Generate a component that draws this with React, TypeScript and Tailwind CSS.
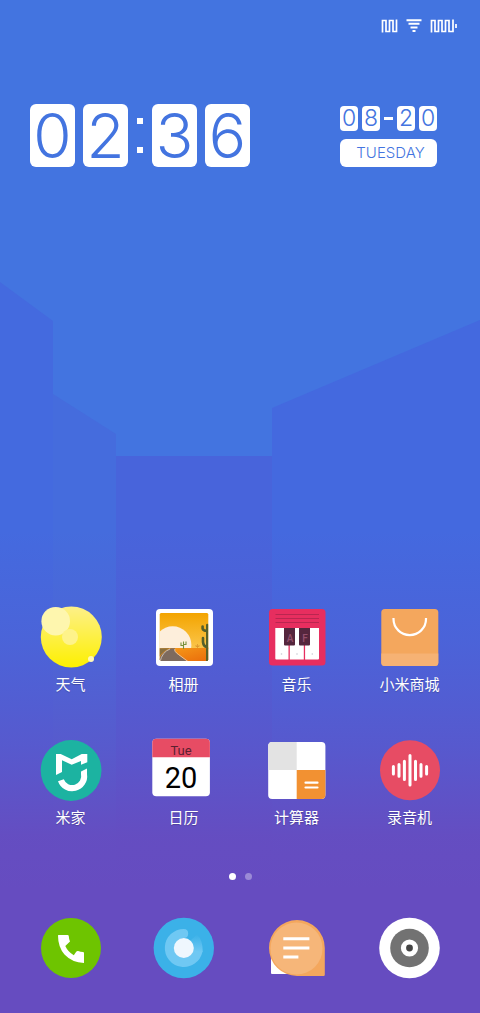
import type { ReactNode } from "react";

const Wallpaper = () => (
  <svg
    className="absolute inset-0 -z-10 h-full w-full"
    viewBox="0 0 480 1013"
    preserveAspectRatio="none"
    aria-hidden="true"
  >
    <defs>
      <linearGradient id="dusk" x1="0" y1="0" x2="0" y2="1">
        <stop offset="0" stopColor="#664cc0" stopOpacity="0" />
        <stop offset="0.3" stopColor="#664cc0" stopOpacity="0.2" />
        <stop offset="0.6" stopColor="#664cc0" stopOpacity="0.55" />
        <stop offset="0.85" stopColor="#664cc0" stopOpacity="0.95" />
        <stop offset="1" stopColor="#664cc0" />
      </linearGradient>
    </defs>
    <rect width="480" height="1013" fill="#4374e0" />
    <path d="M0 282L53 321V1013H0Z" fill="#446adf" />
    <path d="M53 394L116 434V1013H53Z" fill="#456cdd" />
    <path d="M116 456H272V1013H116Z" fill="#4864db" />
    <path d="M272 408L480 320V1013H272Z" fill="#4469df" />
    <rect y="530" width="480" height="360" fill="url(#dusk)" />
    <rect y="889" width="480" height="124" fill="#664cc0" />
  </svg>
);

const StatusBar = () => (
  <div className="flex items-center justify-end gap-2 pt-[19px] pr-[22px]">
    <svg width="17" height="14" viewBox="0 0 17 14" fill="none" stroke="white" strokeWidth="1.7">
      <path d="M1.5 13.5V1.5H5V12.5H8.5V1.5H12V12.5H15.5V0.5" />
    </svg>
    <svg width="16" height="14" viewBox="0 0 16 14" stroke="white" strokeWidth="2">
      <path d="M0.5 1.2H15.5M2.5 4.8H13.5M4.5 8.4H11.5M6.5 12H9.5" />
    </svg>
    <svg width="28" height="14" viewBox="0 0 28 14" fill="none" stroke="white" strokeWidth="1.7">
      <path d="M1.5 13.5V1.5H5V12.5H8.5V1.5H12V12.5H15.5V1.5H19V12.5H23V0.5" />
      <path d="M26 5V9" />
    </svg>
  </div>
);

const BigDigit = ({ value }: { value: string }) => (
  <span className="flex h-[63px] w-[45px] items-center justify-center rounded-md bg-white text-[62px] leading-[62px]">
    {value}
  </span>
);

const SmallDigit = ({ value }: { value: string }) => (
  <span className="flex h-[25px] w-[18px] items-center justify-center rounded bg-white text-[23px] leading-[25px]">
    {value}
  </span>
);

const Clock = () => (
  <div className="mt-[71px] flex items-start justify-between pr-[43px] pl-[30px] font-['Inter',sans-serif] font-light text-[#4374e0]">
    <div className="flex items-center">
      <div className="flex gap-2">
        <BigDigit value="0" />
        <BigDigit value="2" />
      </div>
      <div className="mx-[9px] flex flex-col gap-[23px]">
        <span className="size-[6px] bg-white" />
        <span className="size-[6px] bg-white" />
      </div>
      <div className="flex gap-2">
        <BigDigit value="3" />
        <BigDigit value="6" />
      </div>
    </div>
    <div className="mt-0.5">
      <div className="flex items-center gap-1">
        <SmallDigit value="0" />
        <SmallDigit value="8" />
        <span className="h-[3px] w-[9px] bg-white" />
        <SmallDigit value="2" />
        <SmallDigit value="0" />
      </div>
      <div className="mt-2 flex h-[28px] items-center justify-center rounded-md bg-white pl-1 text-[15px]">
        TUESDAY
      </div>
    </div>
  </div>
);

const Icon = ({ children }: { children: ReactNode }) => (
  <svg width="65" height="65" viewBox="0 0 65 65" fill="none" aria-hidden="true">
    {children}
  </svg>
);

const WeatherIcon = () => (
  <Icon>
    <defs>
      <linearGradient id="sun" x1="0" y1="0" x2="0" y2="1">
        <stop offset="0" stopColor="#fdf089" />
        <stop offset="1" stopColor="#fdf000" />
      </linearGradient>
    </defs>
    <circle cx="33.3" cy="32" r="30.5" fill="url(#sun)" />
    <circle cx="17.7" cy="16.2" r="14.3" fill="#fef6ae" />
    <circle cx="32" cy="32" r="8" fill="#fef38a" />
    <circle cx="53" cy="54" r="3" fill="#fff8b8" />
  </Icon>
);

const GalleryIcon = () => (
  <Icon>
    <defs>
      <linearGradient id="sky" x1="0" y1="0" x2="0" y2="1">
        <stop offset="0" stopColor="#f3a400" />
        <stop offset="1" stopColor="#fbc64c" />
      </linearGradient>
      <linearGradient id="sand" x1="0" y1="0" x2="1" y2="1">
        <stop offset="0" stopColor="#f6a01c" />
        <stop offset="1" stopColor="#ea6a0a" />
      </linearGradient>
      <clipPath id="photo">
        <rect x="8.7" y="8" width="48.6" height="48" rx="1.5" />
      </clipPath>
    </defs>
    <rect x="5" y="4" width="57" height="57" rx="4" fill="white" />
    <g clipPath="url(#photo)">
      <rect x="8" y="8" width="50" height="36" fill="url(#sky)" />
      <circle cx="21.7" cy="40" r="18.7" fill="#fdeedb" />
      <path d="M8 43.5C20 42 40 44 58 42.5V57H8Z" fill="url(#sand)" />
      <path d="M8 57V54Q11 46 20 43.2H24Q22.5 46 27 49.5L37 57Z" fill="#7d6a5e" />
      <path d="M8 43.2H19Q12 46 8 52Z" fill="#8a7040" />
      <path d="M19 44Q11 47 9 57M24 44Q22.5 46 27.5 49.5L37 56.5" stroke="#efe1cf" strokeWidth="0.7" />
      <path d="M32.5 44V36.5M30 37.5V40.5H32.5M35 36.5V39.5H32.5" stroke="#77913b" strokeWidth="1.1" />
      <path d="M46.5 43V39M45 40V41.5H48V40" stroke="#d9952c" strokeWidth="0.8" />
      <path
        d="M56.3 20V56M51.6 21.5V23.5Q52 25.8 56 25.8M52 33V37Q52.5 41.5 56 42"
        stroke="#56602a"
        strokeWidth="2.6"
        strokeLinecap="round"
      />
    </g>
  </Icon>
);

const MusicIcon = () => (
  <Icon>
    <rect x="5" y="4" width="56.5" height="56.5" rx="3.5" fill="#e72e5f" />
    <path d="M11.5 9.5H55M11.5 13.5H55M11.5 17.5H55" stroke="#b92650" strokeWidth="1" />
    <path
      d="M11.3 23H24.5V54.5H12.3Q11.3 54.5 11.3 53.5ZM25.8 23H39.8V54.5H25.8ZM41.1 23H55V53.5Q55 54.5 54 54.5H41.1Z"
      fill="white"
    />
    <path d="M20 23H31V39.5Q31 40.5 30 40.5H21Q20 40.5 20 39.5ZM35 23H46V39.5Q46 40.5 45 40.5H36Q35 40.5 35 39.5Z" fill="#55263d" />
    <g fill="#94506c" fontFamily="Roboto, sans-serif" fontSize="10" fontWeight="500" textAnchor="middle">
      <text x="26" y="37">A</text>
      <text x="41" y="37">F</text>
    </g>
    <g fill="#c9c9d2">
      <circle cx="17.5" cy="49" r="0.8" />
      <circle cx="33" cy="49" r="0.8" />
      <circle cx="48.3" cy="49" r="0.8" />
    </g>
  </Icon>
);

const StoreIcon = () => (
  <Icon>
    <rect x="4.3" y="4" width="57" height="57" rx="3.5" fill="#f4a75d" />
    <path d="M4.3 48.5H61.3V57.5Q61.3 61 57.8 61H7.8Q4.3 61 4.3 57.5Z" fill="#f6b274" />
    <path d="M16.5 13V14A16.2 16 0 0 0 49 14V13" stroke="white" strokeWidth="2.2" />
  </Icon>
);

const MiHomeIcon = () => (
  <Icon>
    <circle cx="33.1" cy="32.5" r="30.4" fill="#1cb3a1" />
    <path
      d="M18 16H22.7L33.7 21.3L43.7 16H49.3V24.3L43 26.7V23L33.7 26.7L24 22.3V34L18 37Z"
      fill="white"
    />
    <path d="M49 30.5L43 33.5V36A9 9 0 0 1 25.8 41.2L20 43.2A15 15 0 0 0 49 36Z" fill="white" />
  </Icon>
);

const CalendarIcon = () => (
  <Icon>
    <rect x="1.3" y="0.8" width="57.6" height="57.5" rx="4" fill="white" />
    <path d="M1.3 19.3V4.8Q1.3 0.8 5.3 0.8H54.9Q58.9 0.8 58.9 4.8V19.3Z" fill="#e74c64" />
    <g fontFamily="Roboto, sans-serif" textAnchor="middle">
      <text x="30" y="16.5" fontSize="13" fill="#5b2030">Tue</text>
      <text x="30" y="49.7" fontSize="29" fill="black">20</text>
    </g>
  </Icon>
);

const CalculatorIcon = () => (
  <Icon>
    <rect x="4.2" y="4" width="57.2" height="57" rx="4" fill="white" />
    <path d="M4.2 32V8Q4.2 4 8.2 4H32.7V32Z" fill="#e3e3e3" />
    <path d="M32.7 32H61.4V57Q61.4 61 57.4 61H32.7Z" fill="#f29132" />
    <path d="M41.5 44.7H53.5M41.5 49.5H53.5" stroke="white" strokeWidth="2.2" strokeLinecap="round" />
  </Icon>
);

const RecorderIcon = () => (
  <Icon>
    <circle cx="33" cy="32.3" r="30" fill="#e74c64" />
    <path
      d="M16.4 28.6V36M22 26.4V38.2M27.4 23.2V41.4M33 17.6V47M38.5 23.2V41.4M44 26.4V38.2M49.6 28.6V36"
      stroke="white"
      strokeWidth="3"
      strokeLinecap="round"
    />
  </Icon>
);

const PhoneIcon = () => (
  <Icon>
    <circle cx="33" cy="32" r="30" fill="#6ec400" />
    <path
      d="M20.5 19H29.5Q30.7 19 30.8 20.2Q31 23.5 32 25.5L27.3 30Q30 36 35.8 39.2L38.2 35.8Q39 34.7 40.2 35Q42.5 36 45 36Q46 36 46 37.2V47Q34 46.5 26.5 38.5Q20 31 20 19.5Q20 19 20.5 19Z"
      fill="white"
    />
  </Icon>
);

const BrowserIcon = () => (
  <Icon>
    <defs>
      <linearGradient id="tail" x1="0" y1="0" x2="0" y2="1">
        <stop offset="0" stopColor="#6fc8f3" stopOpacity="0" />
        <stop offset="1" stopColor="#6fc8f3" />
      </linearGradient>
    </defs>
    <circle cx="32.8" cy="32" r="30.2" fill="#3bb1e8" />
    <path d="M39 25L46 18.5Q51.8 24 51.8 36H42Z" fill="url(#tail)" />
    <path
      d="M32.8 13A19 19 0 1 0 51.4 36L42 34A9.5 9.5 0 1 1 32.8 22Q37.2 22 37.2 17.5Q37.2 13 32.8 13Z"
      fill="#6fc8f3"
    />
    <circle cx="32.8" cy="32" r="10" fill="#eff7fe" />
  </Icon>
);

const MessagesIcon = () => (
  <Icon>
    <path d="M7 36H32V58H8Q7 58 7 57Z" fill="white" />
    <path d="M33 4A28 28 0 0 0 33 60H59.5Q60.8 60 60.8 58.8V32A28 28 0 0 0 33 4Z" fill="#f4a75d" />
    <circle cx="32.5" cy="32.5" r="26" fill="#f6b679" />
    <path d="M19.3 22.7H45.4M19.3 32H45.4M19.3 41H34.4" stroke="white" strokeWidth="3" />
  </Icon>
);

const CameraIcon = () => (
  <Icon>
    <circle cx="32.5" cy="32" r="30.3" fill="white" />
    <circle cx="32.5" cy="32" r="19.3" fill="#727272" />
    <circle cx="32.5" cy="32" r="8.6" fill="white" />
    <circle cx="32.5" cy="32" r="3.4" fill="#444444" />
  </Icon>
);

const apps = [
  { name: "天气", icon: <WeatherIcon /> },
  { name: "相册", icon: <GalleryIcon /> },
  { name: "音乐", icon: <MusicIcon /> },
  { name: "小米商城", icon: <StoreIcon /> },
  { name: "米家", icon: <MiHomeIcon /> },
  { name: "日历", icon: <CalendarIcon /> },
  { name: "计算器", icon: <CalculatorIcon /> },
  { name: "录音机", icon: <RecorderIcon /> },
];

const dock = [
  { name: "电话", icon: <PhoneIcon /> },
  { name: "浏览器", icon: <BrowserIcon /> },
  { name: "短信", icon: <MessagesIcon /> },
  { name: "相机", icon: <CameraIcon /> },
];

const App = () => {
  return (
    <main className="relative isolate flex min-h-screen flex-col overflow-hidden font-['Noto_Sans_CJK_SC',sans-serif]">
      <Wallpaper />
      <StatusBar />
      <Clock />

      {/* App grid */}
      <div className="mt-auto grid grid-cols-4 gap-y-11 px-3.5 pt-10">
        {apps.map((app) => (
          <button key={app.name} type="button" className="flex flex-col items-center gap-1">
            {app.icon}
            <span className="text-[15px] leading-5 text-white text-shadow-xs">{app.name}</span>
          </button>
        ))}
      </div>

      {/* Page indicator */}
      <div className="mt-[46px] flex justify-center gap-[9px]">
        <span className="size-[7px] rounded-full bg-white" />
        <span className="size-[7px] rounded-full bg-white/35" />
      </div>

      {/* Dock */}
      <div className="mt-9 mb-8 grid grid-cols-4 px-3.5">
        {dock.map((app) => (
          <button key={app.name} type="button" aria-label={app.name} className="flex justify-center">
            {app.icon}
          </button>
        ))}
      </div>
    </main>
  );
};

export default App;
